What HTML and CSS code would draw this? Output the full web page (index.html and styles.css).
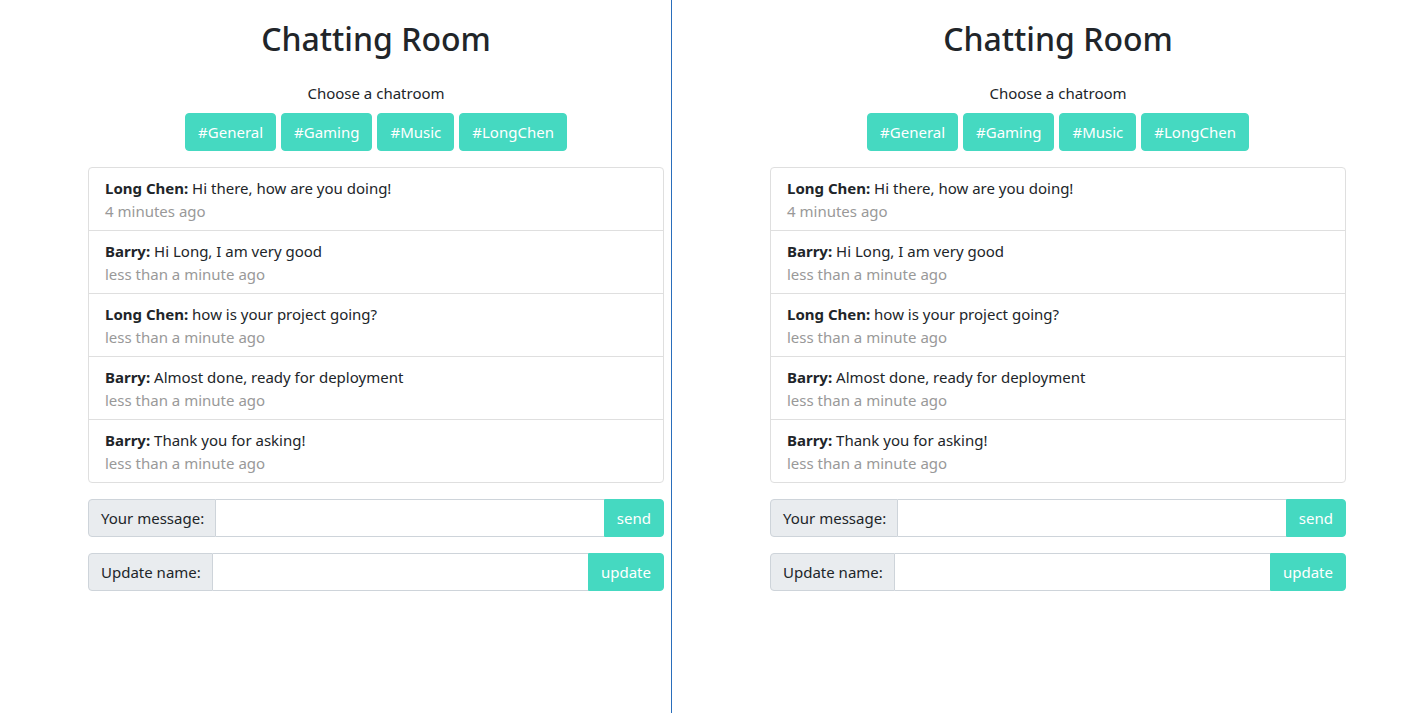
FILE: index.html
```html
<!DOCTYPE html>
<html lang="en">
<head>
<meta charset="utf-8">
<title>Chatting Room</title>
<link rel="stylesheet" href="styles.css">
</head>
<body>
<div class="page">
  <section class="pane pane-left">
    <div class="chat">
      <h1 class="title">Chatting Room</h1>
      <p class="choose">Choose a chatroom</p>
      <div class="rooms">
        <button class="btn">#General</button>
        <button class="btn">#Gaming</button>
        <button class="btn">#Music</button>
        <button class="btn">#LongChen</button>
      </div>
      <ul class="list">
        <li class="item"><div><b>Long Chen:</b> Hi there, how are you doing!</div><div class="time">4 minutes ago</div></li>
        <li class="item"><div><b>Barry:</b> Hi Long, I am very good</div><div class="time">less than a minute ago</div></li>
        <li class="item"><div><b>Long Chen:</b> how is your project going?</div><div class="time">less than a minute ago</div></li>
        <li class="item"><div><b>Barry:</b> Almost done, ready for deployment</div><div class="time">less than a minute ago</div></li>
        <li class="item"><div><b>Barry:</b> Thank you for asking!</div><div class="time">less than a minute ago</div></li>
      </ul>
      <form class="group">
        <span class="label">Your message:</span>
        <input class="field" type="text">
        <button class="btn btn-end" type="button">send</button>
      </form>
      <form class="group">
        <span class="label">Update name:</span>
        <input class="field" type="text">
        <button class="btn btn-end" type="button">update</button>
      </form>
    </div>
  </section>
  <section class="pane pane-right">
    <div class="chat">
      <h1 class="title">Chatting Room</h1>
      <p class="choose">Choose a chatroom</p>
      <div class="rooms">
        <button class="btn">#General</button>
        <button class="btn">#Gaming</button>
        <button class="btn">#Music</button>
        <button class="btn">#LongChen</button>
      </div>
      <ul class="list">
        <li class="item"><div><b>Long Chen:</b> Hi there, how are you doing!</div><div class="time">4 minutes ago</div></li>
        <li class="item"><div><b>Barry:</b> Hi Long, I am very good</div><div class="time">less than a minute ago</div></li>
        <li class="item"><div><b>Long Chen:</b> how is your project going?</div><div class="time">less than a minute ago</div></li>
        <li class="item"><div><b>Barry:</b> Almost done, ready for deployment</div><div class="time">less than a minute ago</div></li>
        <li class="item"><div><b>Barry:</b> Thank you for asking!</div><div class="time">less than a minute ago</div></li>
      </ul>
      <form class="group">
        <span class="label">Your message:</span>
        <input class="field" type="text">
        <button class="btn btn-end" type="button">send</button>
      </form>
      <form class="group">
        <span class="label">Update name:</span>
        <input class="field" type="text">
        <button class="btn btn-end" type="button">update</button>
      </form>
    </div>
  </section>
</div>
</body>
</html>
```

FILE: styles.css
```css
* { box-sizing: border-box; }
html, body { margin: 0; padding: 0; }
body {
  font-family: "Noto Sans", "Open Sans", "Liberation Sans", sans-serif;
  font-size: 15px;
  line-height: 24px;
  color: #212529;
  background: #fff;
}
.page {
  display: flex;
  height: 713px;
}
.pane {
  height: 713px;
}
.pane-left {
  width: 672px;
  padding-left: 88px;
  border-right: 1px solid #2a6ebb;
}
.pane-right {
  flex: 1;
  padding-left: 98px;
}
.chat {
  width: 576px;
  text-align: center;
}
.title {
  margin: 16px 0 0;
  font-size: 32px;
  line-height: 46px;
  font-weight: 500;
}
.choose {
  margin: 19px 0 0;
  line-height: 24px;
}
.rooms {
  display: flex;
  justify-content: center;
  gap: 5px;
  margin-top: 8px;
}
.btn {
  font: inherit;
  color: #fff;
  background: #45d9c1;
  border: 1px solid #45d9c1;
  border-radius: 4px;
  height: 38px;
  padding: 0 12px;
  cursor: pointer;
}
.list {
  list-style: none;
  margin: 16px 0 0;
  padding: 0;
  border: 1px solid #dfdfdf;
  border-radius: 4px;
  text-align: left;
}
.item {
  padding: 8px 16px 7px;
  border-top: 1px solid #dfdfdf;
  height: 63px;
}
.item:first-child {
  border-top: 0;
  height: 62px;
}
.item b { font-weight: 700; }
.time {
  color: #999;
  margin-top: -1px;
}
.group {
  display: flex;
  margin: 16px 0 0;
  height: 38px;
}
.label {
  display: flex;
  align-items: center;
  padding: 0 11px 0 12px;
  background: #e9ecef;
  border: 1px solid #ced4da;
  border-radius: 4px 0 0 4px;
  white-space: nowrap;
}
.field {
  flex: 1;
  min-width: 0;
  border: 1px solid #ced4da;
  border-left: 0;
  border-right: 0;
  font: inherit;
  padding: 0 12px;
  outline: none;
}
.btn-end {
  border-radius: 0 4px 4px 0;
}
```
